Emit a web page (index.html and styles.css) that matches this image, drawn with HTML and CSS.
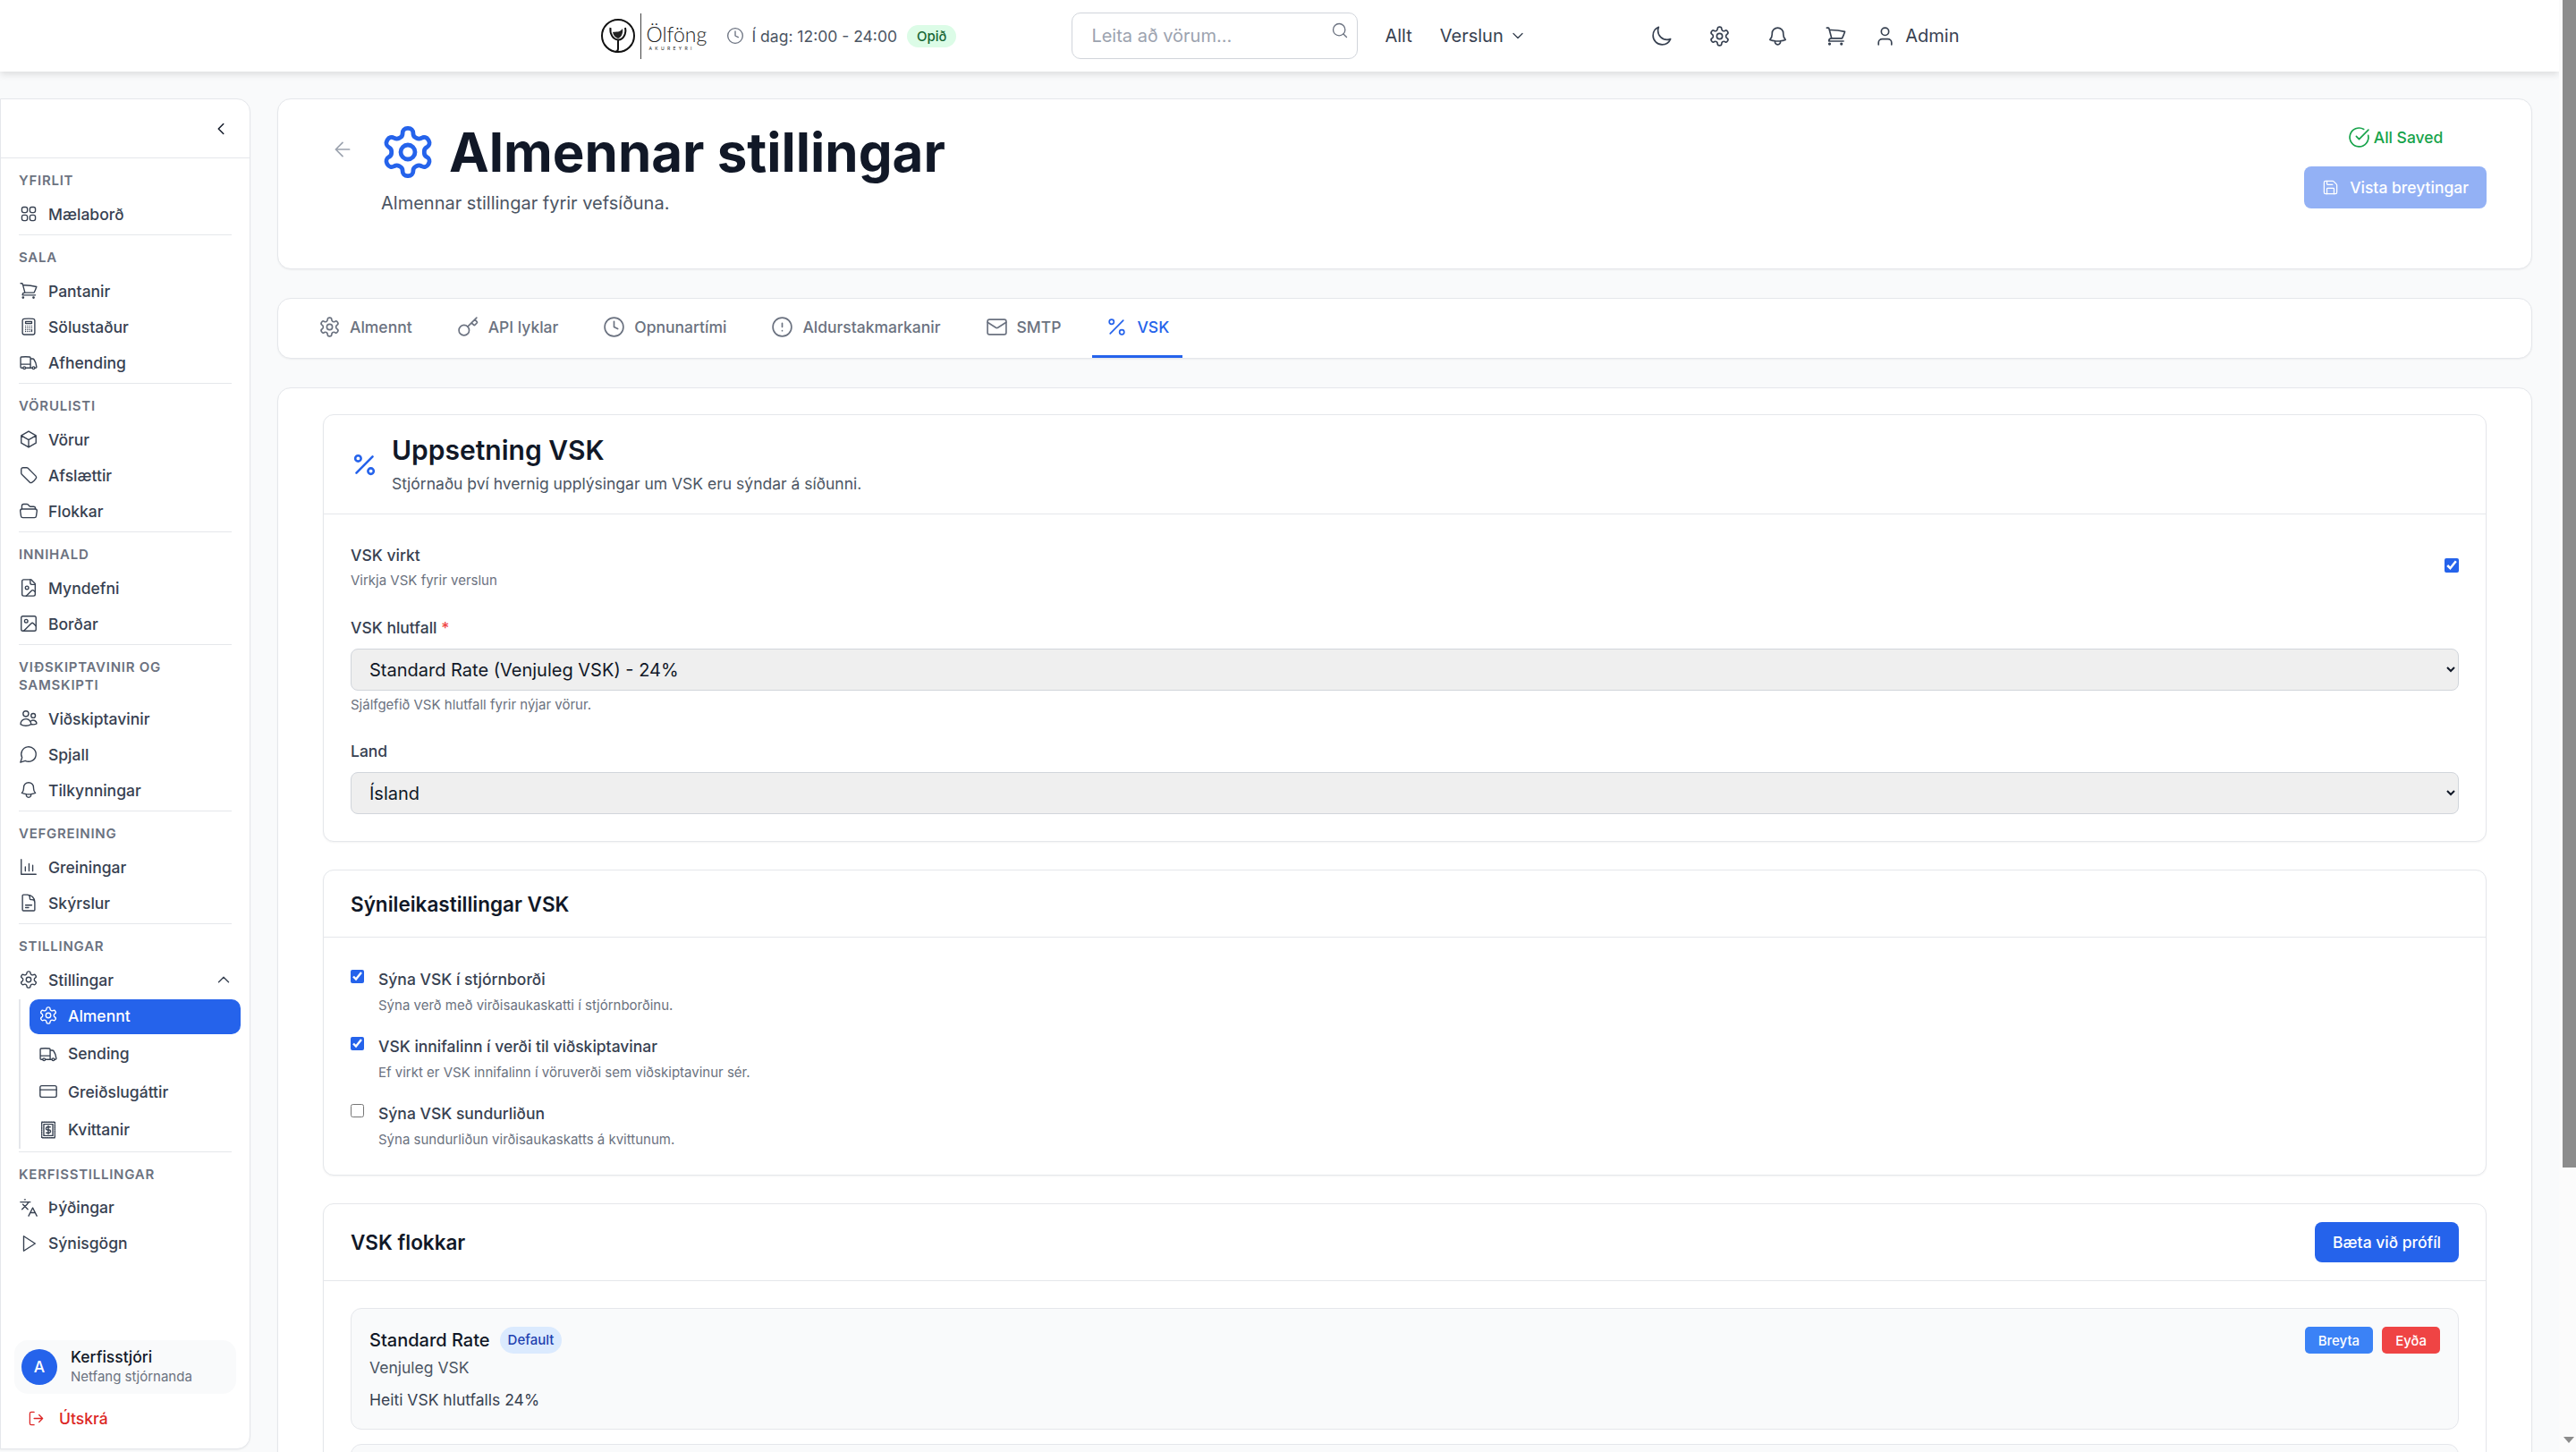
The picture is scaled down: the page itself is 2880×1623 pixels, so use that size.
FILE: index.html
```html
<!DOCTYPE html>
<html lang="is">
<head>
    <meta charset="UTF-8">
    <meta name="viewport" content="width=device-width, initial-scale=1.0">
    <title>Almennar stillingar</title>
    <link rel="stylesheet" href="styles.css">
</head>
<body>
    <svg class="icon-defs" aria-hidden="true">
        <symbol id="i-grid" viewBox="0 0 24 24"><path d="M3.75 6A2.25 2.25 0 0 1 6 3.75h2.25A2.25 2.25 0 0 1 10.5 6v2.25a2.25 2.25 0 0 1-2.25 2.25H6a2.25 2.25 0 0 1-2.25-2.25V6ZM3.75 15.75A2.25 2.25 0 0 1 6 13.5h2.25a2.25 2.25 0 0 1 2.25 2.25V18a2.25 2.25 0 0 1-2.25 2.25H6A2.25 2.25 0 0 1 3.75 18v-2.25ZM13.5 6a2.25 2.25 0 0 1 2.25-2.25H18A2.25 2.25 0 0 1 20.25 6v2.25A2.25 2.25 0 0 1 18 10.5h-2.25a2.25 2.25 0 0 1-2.25-2.25V6ZM13.5 15.75a2.25 2.25 0 0 1 2.25-2.25H18a2.25 2.25 0 0 1 2.25 2.25V18A2.25 2.25 0 0 1 18 20.25h-2.25A2.25 2.25 0 0 1 13.5 18v-2.25Z"/></symbol>
        <symbol id="i-cart" viewBox="0 0 24 24"><path d="M2.25 3h1.386c.51 0 .955.343 1.087.835l.383 1.437M7.5 14.25a3 3 0 0 0-3 3h15.75m-12.75-3h11.218c1.121-2.3 2.1-4.684 2.924-7.138a60.114 60.114 0 0 0-16.536-1.84M7.5 14.25 5.106 5.272M6 20.25a.75.75 0 1 1-1.5 0 .75.75 0 0 1 1.5 0Zm12.75 0a.75.75 0 1 1-1.5 0 .75.75 0 0 1 1.5 0Z"/></symbol>
        <symbol id="i-calculator" viewBox="0 0 24 24"><path d="M15.75 15.75V18m-7.5-6.75h.008v.008H8.25v-.008Zm0 2.25h.008v.008H8.25V13.5Zm0 2.25h.008v.008H8.25v-.008Zm0 2.25h.008v.008H8.25V18Zm2.498-6.75h.007v.008h-.007v-.008Zm0 2.25h.007v.008h-.007V13.5Zm0 2.25h.007v.008h-.007v-.008Zm0 2.25h.007v.008h-.007V18Zm2.504-6.75h.008v.008h-.008v-.008Zm0 2.25h.008v.008h-.008V13.5Zm0 2.25h.008v.008h-.008v-.008Zm0 2.25h.008v.008h-.008V18Zm2.498-6.75h.008v.008h-.008v-.008Zm0 2.25h.008v.008h-.008V13.5ZM8.25 6h7.5v2.25h-7.5V6ZM12 2.25c-1.892 0-3.758.11-5.593.322C5.307 2.7 4.5 3.65 4.5 4.757V19.5a2.25 2.25 0 0 0 2.25 2.25h10.5a2.25 2.25 0 0 0 2.25-2.25V4.757c0-1.108-.806-2.057-1.907-2.185A48.507 48.507 0 0 0 12 2.25Z"/></symbol>
        <symbol id="i-truck" viewBox="0 0 24 24"><path d="M8.25 18.75a1.5 1.5 0 0 1-3 0m3 0a1.5 1.5 0 0 0-3 0m3 0h6m-9 0H3.375a1.125 1.125 0 0 1-1.125-1.125V14.25m17.25 4.5a1.5 1.5 0 0 1-3 0m3 0a1.5 1.5 0 0 0-3 0m3 0h1.125c.621 0 1.129-.504 1.09-1.124a17.902 17.902 0 0 0-3.213-9.193 2.056 2.056 0 0 0-1.58-.86H14.25M16.5 18.75h-2.25m0-11.177v-.958c0-.568-.422-1.048-.987-1.106a48.554 48.554 0 0 0-10.026 0 1.106 1.106 0 0 0-.987 1.106v7.635m12-6.677v6.677m0 4.5v-4.5m0 0h-12"/></symbol>
        <symbol id="i-cube" viewBox="0 0 24 24"><path d="m21 7.5-9-5.25L3 7.5m18 0-9 5.25m9-5.25v9l-9 5.25M3 7.5l9 5.25M3 7.5v9l9 5.25m0-9v9"/></symbol>
        <symbol id="i-tag" viewBox="0 0 24 24"><path d="M9.568 3H5.25A2.25 2.25 0 0 0 3 5.25v4.318c0 .597.237 1.17.659 1.591l9.581 9.581c.699.699 1.78.872 2.607.33a18.095 18.095 0 0 0 5.223-5.223c.542-.827.369-1.908-.33-2.607L11.16 3.66A2.25 2.25 0 0 0 9.568 3Z"/></symbol>
        <symbol id="i-folder" viewBox="0 0 24 24"><path d="M3.75 9.776c.112-.017.227-.026.344-.026h15.812c.117 0 .232.009.344.026m-16.5 0a2.25 2.25 0 0 0-1.883 2.542l.857 6a2.25 2.25 0 0 0 2.227 1.932H19.05a2.25 2.25 0 0 0 2.227-1.932l.857-6a2.25 2.25 0 0 0-1.883-2.542m-16.5 0V6A2.25 2.25 0 0 1 6 3.75h3.879a1.5 1.5 0 0 1 1.06.44l2.122 2.12a1.5 1.5 0 0 0 1.06.44H18A2.25 2.25 0 0 1 20.25 9v.776"/></symbol>
        <symbol id="i-file-image" viewBox="0 0 24 24"><path d="M15 2H6a2 2 0 0 0-2 2v16a2 2 0 0 0 2 2h12a2 2 0 0 0 2-2V7Z"/><path d="M14 2v4a2 2 0 0 0 2 2h4"/><circle cx="10" cy="12" r="2"/><path d="m20 17-1.296-1.296a2.41 2.41 0 0 0-3.408 0L9 22"/></symbol>
        <symbol id="i-image" viewBox="0 0 24 24"><rect x="3" y="3" width="18" height="18" rx="2"/><circle cx="9" cy="9" r="2"/><path d="m21 15-3.086-3.086a2 2 0 0 0-2.828 0L6 21"/></symbol>
        <symbol id="i-users" viewBox="0 0 24 24"><path d="M15 19.128a9.38 9.38 0 0 0 2.625.372 9.337 9.337 0 0 0 4.121-.952 4.125 4.125 0 0 0-7.533-2.493M15 19.128v-.003c0-1.113-.285-2.16-.786-3.07M15 19.128v.106A12.318 12.318 0 0 1 8.624 21c-2.331 0-4.512-.645-6.374-1.766l-.001-.109a6.375 6.375 0 0 1 11.964-3.07M12 6.375a3.375 3.375 0 1 1-6.75 0 3.375 3.375 0 0 1 6.75 0Zm8.25 2.25a2.625 2.625 0 1 1-5.25 0 2.625 2.625 0 0 1 5.25 0Z"/></symbol>
        <symbol id="i-chat" viewBox="0 0 24 24"><path d="M7.9 20A9 9 0 1 0 4 16.1L2 22Z"/></symbol>
        <symbol id="i-bell" viewBox="0 0 24 24"><path d="M14.857 17.082a23.848 23.848 0 0 0 5.454-1.31A8.967 8.967 0 0 1 18 9.75V9A6 6 0 0 0 6 9v.75a8.967 8.967 0 0 1-2.312 6.022c1.733.64 3.56 1.085 5.455 1.31m5.714 0a24.255 24.255 0 0 1-5.714 0m5.714 0a3 3 0 1 1-5.714 0"/></symbol>
        <symbol id="i-chart" viewBox="0 0 24 24"><path d="M3 3v18h18M8 17v-5M12.5 17V8M17 17v-7"/></symbol>
        <symbol id="i-doc" viewBox="0 0 24 24"><path d="M19.5 14.25v-2.625a3.375 3.375 0 0 0-3.375-3.375h-1.5A1.125 1.125 0 0 1 13.5 7.125v-1.5a3.375 3.375 0 0 0-3.375-3.375H8.25m0 12.75h7.5m-7.5 3H12M10.5 2.25H5.625c-.621 0-1.125.504-1.125 1.125v17.25c0 .621.504 1.125 1.125 1.125h12.75c.621 0 1.125-.504 1.125-1.125V11.25a9 9 0 0 0-9-9Z"/></symbol>
        <symbol id="i-gear" viewBox="0 0 24 24"><path d="M12.22 2h-.44a2 2 0 0 0-2 2v.18a2 2 0 0 1-1 1.73l-.43.25a2 2 0 0 1-2 0l-.15-.08a2 2 0 0 0-2.73.73l-.22.38a2 2 0 0 0 .73 2.73l.15.1a2 2 0 0 1 1 1.72v.51a2 2 0 0 1-1 1.74l-.15.09a2 2 0 0 0-.73 2.73l.22.38a2 2 0 0 0 2.73.73l.15-.08a2 2 0 0 1 2 0l.43.25a2 2 0 0 1 1 1.73V20a2 2 0 0 0 2 2h.44a2 2 0 0 0 2-2v-.18a2 2 0 0 1 1-1.73l.43-.25a2 2 0 0 1 2 0l.15.08a2 2 0 0 0 2.73-.73l.22-.39a2 2 0 0 0-.73-2.73l-.15-.08a2 2 0 0 1-1-1.74v-.5a2 2 0 0 1 1-1.74l.15-.09a2 2 0 0 0 .73-2.73l-.22-.38a2 2 0 0 0-2.73-.73l-.15.08a2 2 0 0 1-2 0l-.43-.25a2 2 0 0 1-1-1.73V4a2 2 0 0 0-2-2z"/><circle cx="12" cy="12" r="3"/></symbol>
        <symbol id="i-card" viewBox="0 0 24 24"><rect x="2" y="5" width="20" height="14" rx="2"/><path d="M2 10h20"/></symbol>
        <symbol id="i-receipt" viewBox="0 0 24 24"><rect x="4" y="2.5" width="16" height="19" stroke-dasharray="1.6 1.1"/><rect x="6.5" y="5" width="11" height="14"/><path d="M14.5 8.5H11a1.75 1.75 0 0 0 0 3.5h2a1.75 1.75 0 0 1 0 3.5H9.5M12 7v10"/></symbol>
        <symbol id="i-languages" viewBox="0 0 24 24"><path d="m5 8 6 6M4 14l6-6 2-3M2 5h12M7 2h1M22 22l-5-10-5 10M14 18h6"/></symbol>
        <symbol id="i-play" viewBox="0 0 24 24"><path d="M6 3l14 9-14 9V3z"/></symbol>
        <symbol id="i-logout" viewBox="0 0 24 24"><path d="M9 21H5a2 2 0 0 1-2-2V5a2 2 0 0 1 2-2h4M16 17l5-5-5-5M21 12H9"/></symbol>
        <symbol id="i-moon" viewBox="0 0 24 24"><path d="M21.752 15.002A9.72 9.72 0 0 1 18 15.75c-5.385 0-9.75-4.365-9.75-9.75 0-1.33.266-2.597.748-3.752A9.753 9.753 0 0 0 3 11.25C3 16.635 7.365 21 12.75 21a9.753 9.753 0 0 0 9.002-5.998Z"/></symbol>
        <symbol id="i-user" viewBox="0 0 24 24"><path d="M19 21v-2a4 4 0 0 0-4-4H9a4 4 0 0 0-4 4v2"/><circle cx="12" cy="7" r="4"/></symbol>
        <symbol id="i-search" viewBox="0 0 24 24"><circle cx="11" cy="11" r="8"/><path d="m21 21-4.3-4.3"/></symbol>
        <symbol id="i-clock" viewBox="0 0 24 24"><circle cx="12" cy="12" r="10"/><path d="M12 6v6l4 2"/></symbol>
        <symbol id="i-key" viewBox="0 0 24 24"><path d="m15.5 7.5 2.3 2.3a1 1 0 0 0 1.4 0l2.1-2.1a1 1 0 0 0 0-1.4L19 4M21 2l-9.6 9.6"/><circle cx="7.5" cy="15.5" r="5.5"/></symbol>
        <symbol id="i-alert" viewBox="0 0 24 24"><circle cx="12" cy="12" r="10"/><path d="M12 8v4M12 16h.01"/></symbol>
        <symbol id="i-mail" viewBox="0 0 24 24"><rect x="2" y="4" width="20" height="16" rx="2"/><path d="m22 7-8.97 5.7a1.94 1.94 0 0 1-2.06 0L2 7"/></symbol>
        <symbol id="i-percent" viewBox="0 0 24 24"><path d="M19 5 5 19"/><circle cx="6.5" cy="6.5" r="2.5"/><circle cx="17.5" cy="17.5" r="2.5"/></symbol>
        <symbol id="i-save" viewBox="0 0 24 24"><path d="M15.2 3a2 2 0 0 1 1.4.6l3.8 3.8a2 2 0 0 1 .6 1.4V19a2 2 0 0 1-2 2H5a2 2 0 0 1-2-2V5a2 2 0 0 1 2-2z"/><path d="M17 21v-7a1 1 0 0 0-1-1H8a1 1 0 0 0-1 1v7M7 3v4a1 1 0 0 0 1 1h7"/></symbol>
        <symbol id="i-check" viewBox="0 0 24 24"><path d="M21.8 10A10 10 0 1 1 17 3.335M9 11l3 3L22 4"/></symbol>
        <symbol id="i-left" viewBox="0 0 24 24"><path d="m15 18-6-6 6-6"/></symbol>
        <symbol id="i-up" viewBox="0 0 24 24"><path d="m18 15-6-6-6 6"/></symbol>
        <symbol id="i-down" viewBox="0 0 24 24"><path d="m6 9 6 6 6-6"/></symbol>
        <symbol id="i-back" viewBox="0 0 24 24"><path d="m12 19-7-7 7-7M19 12H5"/></symbol>
    </svg>

    <div class="page">
        <header class="topbar">
            <div class="topbar-inner">
                <div class="brand">
                    <svg class="brand-mark" viewBox="0 0 40 40">
                        <circle cx="20" cy="20" r="18"/>
                        <path d="M11.5 11c-1 7 3 13 8.500 13.500s9.500-6.500 8-13.500M20 24.500v10q0 3-3 3.500"/>
                        <path class="brand-leaf" d="M14 16c3-1 8 1 11-4 1 6-2 10-5 11-3-1-5-3-6-7z"/>
                    </svg>
                    <div class="brand-text">
                        <span class="brand-name">Ölföng</span>
                        <span class="brand-sub">AKUREYRI</span>
                    </div>
                </div>
                <div class="hours">
                    <svg class="icon hours-icon"><use href="#i-clock"/></svg>
                    <span>Í dag: 12:00 - 24:00</span>
                    <span class="open-badge">Opið</span>
                </div>
                <div class="search">
                    <input type="text" placeholder="Leita að vörum...">
                    <svg class="icon search-icon"><use href="#i-search"/></svg>
                </div>
                <nav class="topnav">
                    <span>Allt</span>
                    <span class="topnav-drop">Verslun <svg class="icon"><use href="#i-down"/></svg></span>
                </nav>
                <div class="topicons">
                    <svg class="icon"><use href="#i-moon"/></svg>
                    <svg class="icon"><use href="#i-gear"/></svg>
                    <svg class="icon"><use href="#i-bell"/></svg>
                    <svg class="icon"><use href="#i-cart"/></svg>
                    <span class="admin"><svg class="icon"><use href="#i-user"/></svg>Admin</span>
                </div>
            </div>
        </header>

        <div class="layout">
            <aside class="sidebar">
                <div class="sidebar-top"><svg class="icon"><use href="#i-left"/></svg></div>

                <div class="nav-section">
                    <div class="nav-title">Yfirlit</div>
                    <a class="nav-item"><svg class="icon"><use href="#i-grid"/></svg>Mælaborð</a>
                </div>
                <div class="nav-section">
                    <div class="nav-title">Sala</div>
                    <a class="nav-item"><svg class="icon"><use href="#i-cart"/></svg>Pantanir</a>
                    <a class="nav-item"><svg class="icon"><use href="#i-calculator"/></svg>Sölustaður</a>
                    <a class="nav-item"><svg class="icon"><use href="#i-truck"/></svg>Afhending</a>
                </div>
                <div class="nav-section">
                    <div class="nav-title">Vörulisti</div>
                    <a class="nav-item"><svg class="icon"><use href="#i-cube"/></svg>Vörur</a>
                    <a class="nav-item"><svg class="icon"><use href="#i-tag"/></svg>Afslættir</a>
                    <a class="nav-item"><svg class="icon"><use href="#i-folder"/></svg>Flokkar</a>
                </div>
                <div class="nav-section">
                    <div class="nav-title">Innihald</div>
                    <a class="nav-item"><svg class="icon"><use href="#i-file-image"/></svg>Myndefni</a>
                    <a class="nav-item"><svg class="icon"><use href="#i-image"/></svg>Borðar</a>
                </div>
                <div class="nav-section">
                    <div class="nav-title">Viðskiptavinir og samskipti</div>
                    <a class="nav-item"><svg class="icon"><use href="#i-users"/></svg>Viðskiptavinir</a>
                    <a class="nav-item"><svg class="icon"><use href="#i-chat"/></svg>Spjall</a>
                    <a class="nav-item"><svg class="icon"><use href="#i-bell"/></svg>Tilkynningar</a>
                </div>
                <div class="nav-section">
                    <div class="nav-title">Vefgreining</div>
                    <a class="nav-item"><svg class="icon"><use href="#i-chart"/></svg>Greiningar</a>
                    <a class="nav-item"><svg class="icon"><use href="#i-doc"/></svg>Skýrslur</a>
                </div>
                <div class="nav-section">
                    <div class="nav-title">Stillingar</div>
                    <a class="nav-item"><svg class="icon"><use href="#i-gear"/></svg>Stillingar<svg class="icon nav-caret"><use href="#i-up"/></svg></a>
                    <div class="subnav">
                        <a class="sub-item active"><svg class="icon"><use href="#i-gear"/></svg>Almennt</a>
                        <a class="sub-item"><svg class="icon"><use href="#i-truck"/></svg>Sending</a>
                        <a class="sub-item"><svg class="icon"><use href="#i-card"/></svg>Greiðslugáttir</a>
                        <a class="sub-item"><svg class="icon"><use href="#i-receipt"/></svg>Kvittanir</a>
                    </div>
                </div>
                <div class="nav-section last">
                    <div class="nav-title">Kerfisstillingar</div>
                    <a class="nav-item"><svg class="icon"><use href="#i-languages"/></svg>Þýðingar</a>
                    <a class="nav-item"><svg class="icon"><use href="#i-play"/></svg>Sýnisgögn</a>
                </div>

                <div class="sidebar-foot">
                    <div class="user-box">
                        <div class="avatar">A</div>
                        <div>
                            <div class="user-name">Kerfisstjóri</div>
                            <div class="user-mail">Netfang stjórnanda</div>
                        </div>
                    </div>
                    <a class="logout"><svg class="icon"><use href="#i-logout"/></svg>Útskrá</a>
                </div>
            </aside>

            <main class="main">
                <section class="title-card">
                    <svg class="icon back-icon"><use href="#i-back"/></svg>
                    <div class="title-text">
                        <div class="title-row">
                            <svg class="icon title-icon"><use href="#i-gear"/></svg>
                            <h1>Almennar stillingar</h1>
                        </div>
                        <p>Almennar stillingar fyrir vefsíðuna.</p>
                    </div>
                    <div class="save-col">
                        <div class="saved"><svg class="icon"><use href="#i-check"/></svg>All Saved</div>
                        <button class="save-btn"><svg class="icon"><use href="#i-save"/></svg>Vista breytingar</button>
                    </div>
                </section>

                <nav class="tabs">
                    <a class="tab"><svg class="icon"><use href="#i-gear"/></svg>Almennt</a>
                    <a class="tab"><svg class="icon"><use href="#i-key"/></svg>API lyklar</a>
                    <a class="tab"><svg class="icon"><use href="#i-clock"/></svg>Opnunartími</a>
                    <a class="tab"><svg class="icon"><use href="#i-alert"/></svg>Aldurstakmarkanir</a>
                    <a class="tab"><svg class="icon"><use href="#i-mail"/></svg>SMTP</a>
                    <a class="tab active"><svg class="icon"><use href="#i-percent"/></svg>VSK</a>
                </nav>

                <section class="panel">
                    <div class="card">
                        <div class="card-head head-large">
                            <svg class="icon head-icon"><use href="#i-percent"/></svg>
                            <div>
                                <h2>Uppsetning VSK</h2>
                                <p>Stjórnaðu því hvernig upplýsingar um VSK eru sýndar á síðunni.</p>
                            </div>
                        </div>
                        <div class="card-body body-form">
                            <div class="toggle-row">
                                <div>
                                    <label class="field-label">VSK virkt</label>
                                    <div class="help">Virkja VSK fyrir verslun</div>
                                </div>
                                <input type="checkbox" class="check check-right" checked>
                            </div>
                            <div class="field">
                                <label class="field-label">VSK hlutfall <span class="req">*</span></label>
                                <select class="select">
                                    <option>Standard Rate (Venjuleg VSK) - 24%</option>
                                </select>
                                <div class="help">Sjálfgefið VSK hlutfall fyrir nýjar vörur.</div>
                            </div>
                            <div class="field">
                                <label class="field-label">Land</label>
                                <select class="select">
                                    <option>Ísland</option>
                                </select>
                            </div>
                        </div>
                    </div>

                    <div class="card">
                        <div class="card-head">
                            <h3>Sýnileikastillingar VSK</h3>
                        </div>
                        <div class="card-body body-checks">
                            <div class="check-row">
                                <input type="checkbox" class="check" checked>
                                <div>
                                    <label class="field-label">Sýna VSK í stjórnborði</label>
                                    <div class="help">Sýna verð með virðisaukaskatti í stjórnborðinu.</div>
                                </div>
                            </div>
                            <div class="check-row">
                                <input type="checkbox" class="check" checked>
                                <div>
                                    <label class="field-label">VSK innifalinn í verði til viðskiptavinar</label>
                                    <div class="help">Ef virkt er VSK innifalinn í vöruverði sem viðskiptavinur sér.</div>
                                </div>
                            </div>
                            <div class="check-row">
                                <input type="checkbox" class="check">
                                <div>
                                    <label class="field-label">Sýna VSK sundurliðun</label>
                                    <div class="help">Sýna sundurliðun virðisaukaskatts á kvittunum.</div>
                                </div>
                            </div>
                        </div>
                    </div>

                    <div class="card">
                        <div class="card-head head-action">
                            <h3>VSK flokkar</h3>
                            <button class="add-btn">Bæta við prófíl</button>
                        </div>
                        <div class="card-body body-list">
                            <div class="vat-item">
                                <div class="vat-info">
                                    <div class="vat-title">Standard Rate <span class="default-badge">Default</span></div>
                                    <div class="vat-desc">Venjuleg VSK</div>
                                    <div class="vat-rate">Heiti VSK hlutfalls 24%</div>
                                </div>
                                <div class="vat-actions">
                                    <button class="small-btn edit">Breyta</button>
                                    <button class="small-btn del">Eyða</button>
                                </div>
                            </div>
                            <div class="vat-item"></div>
                        </div>
                    </div>
                </section>
            </main>
        </div>
    </div>

    <div class="scrollbar">
        <div class="scroll-thumb"></div>
        <div class="scroll-arrow"></div>
    </div>
</body>
</html>
```

FILE: styles.css
```css
* {
    margin: 0;
    padding: 0;
    box-sizing: border-box;
}

body {
    display: flex;
    height: 100vh;
    overflow: hidden;
    background-color: #f9fafb;
    color: #374151;
    font-family: Inter, "Liberation Sans", sans-serif;
    font-size: 17.5px;
}

.icon-defs {
    display: none;
}

.icon {
    flex: none;
    width: 25px;
    height: 25px;
    fill: none;
    stroke: currentColor;
    stroke-width: 1.6;
    stroke-linecap: round;
    stroke-linejoin: round;
}

.page {
    flex: 1;
    min-width: 0;
    display: flex;
    flex-direction: column;
}

/* top bar */
.topbar {
    position: relative;
    z-index: 2;
    flex: none;
    height: 80px;
    background-color: #fff;
    box-shadow: 0 3px 8px rgba(0, 0, 0, 0.12);
}

.topbar-inner {
    display: flex;
    align-items: center;
    max-width: 1600px;
    height: 100%;
    margin: 0 auto;
    padding: 0 40px;
}

.brand {
    display: flex;
    align-items: center;
    width: 120px;
}

.brand-mark {
    flex: none;
    width: 40px;
    height: 40px;
    fill: none;
    stroke: #111;
    stroke-width: 2;
}

.brand-leaf {
    fill: #222;
    stroke: none;
}

.brand-text {
    display: flex;
    flex-direction: column;
    align-items: flex-start;
    height: 51px;
    margin-left: 5px;
    padding-left: 6px;
    border-left: 1px solid #444;
    color: #222;
}

.brand-name {
    margin-top: 11px;
    font-family: Lato, sans-serif;
    font-size: 23px;
    font-weight: 300;
    line-height: 24px;
}

.brand-sub {
    margin-top: 1px;
    padding-left: 3px;
    font-size: 5px;
    line-height: 6px;
    letter-spacing: 3.3px;
}

.hours {
    display: flex;
    align-items: center;
    margin-left: 21px;
    color: #4b5563;
}

.hours-icon {
    width: 20px;
    height: 20px;
    margin-right: 9px;
    color: #6b7280;
}

.open-badge {
    margin-left: 11px;
    padding: 0 11px;
    border-radius: 13px;
    background-color: #dcfce7;
    color: #166534;
    font-size: 15px;
    font-weight: 500;
    line-height: 25px;
}

.search {
    position: relative;
    width: 320px;
    margin-left: 129px;
}

.search input {
    display: block;
    width: 100%;
    height: 52px;
    padding: 0 50px 0 21px;
    border: 1px solid #d1d5db;
    border-radius: 10px;
    outline: none;
    color: #374151;
    font-family: inherit;
    font-size: 20px;
}

.search input::placeholder {
    color: #9ca3af;
}

.search-icon {
    position: absolute;
    top: 10px;
    right: 10px;
    width: 20px;
    height: 20px;
    color: #6b7280;
}

.topnav {
    display: flex;
    align-items: center;
    gap: 31px;
    margin-left: 30px;
    font-size: 20px;
}

.topnav-drop {
    display: flex;
    align-items: center;
    gap: 6px;
}

.topnav-drop .icon {
    width: 20px;
    height: 20px;
}

.topicons {
    display: flex;
    align-items: center;
    gap: 40px;
    margin-left: auto;
}

.admin {
    display: flex;
    align-items: center;
    gap: 10px;
    margin-left: -10px;
    font-size: 20px;
}

/* sidebar and main */
.layout {
    flex: 1;
    min-height: 0;
    display: flex;
    padding: 30px 30px 0 0;
    overflow: hidden;
}

.sidebar {
    flex: none;
    display: flex;
    flex-direction: column;
    width: 280px;
    height: 1510px;
    border: 1px solid #e5e7eb;
    border-radius: 0 15px 15px 0;
    background-color: #fff;
    box-shadow: 0 1px 2px rgba(0, 0, 0, 0.05);
}

.sidebar-top {
    display: flex;
    align-items: center;
    justify-content: flex-end;
    height: 66px;
    padding-right: 21px;
    border-bottom: 1px solid #e5e7eb;
}

.sidebar-top .icon {
    width: 22px;
    height: 22px;
    color: #111827;
}

.nav-section {
    margin: 0 20px;
    padding: 15px 0 3px;
    border-bottom: 1px solid #e5e7eb;
}

.nav-section.last {
    border-bottom: 0;
}

.nav-title {
    margin-bottom: 7px;
    color: #6b7280;
    font-size: 15px;
    font-weight: 600;
    line-height: 20px;
    letter-spacing: 0.75px;
    text-transform: uppercase;
}

.nav-item,
.sub-item {
    display: flex;
    align-items: center;
    gap: 11px;
    height: 40px;
    font-weight: 500;
}

.nav-item .icon,
.sub-item .icon {
    width: 22px;
    height: 22px;
    stroke-width: 1.5;
}

.nav-caret {
    margin-left: auto;
    margin-right: -2px;
}

.subnav {
    display: flex;
    flex-direction: column;
    gap: 3.5px;
    margin: 2px -10px 0 0;
    padding-left: 10px;
    border-left: 2px solid #e5e7eb;
}

.sub-item {
    height: 39px;
    padding: 0 0 3px 10px;
    border-radius: 10px;
}

.sub-item.active {
    background-color: #2563eb;
    color: #fff;
}

.sidebar-foot {
    margin-top: auto;
    padding: 0 15px 14px;
}

.user-box {
    display: flex;
    align-items: center;
    gap: 15px;
    height: 60px;
    padding: 0 8px;
    border-radius: 15px;
    background-color: #f9fafb;
}

.avatar {
    flex: none;
    width: 40px;
    height: 40px;
    border-radius: 50%;
    background-color: #2563eb;
    color: #fff;
    font-size: 17.5px;
    font-weight: 500;
    line-height: 40px;
    text-align: center;
}

.user-name {
    color: #111827;
    font-weight: 500;
    line-height: 22px;
}

.user-mail {
    color: #6b7280;
    font-size: 15px;
    line-height: 22px;
}

.logout {
    display: flex;
    align-items: center;
    gap: 16px;
    height: 40px;
    margin-top: 7px;
    padding-left: 15px;
    color: #dc2626;
    font-weight: 500;
}

.logout .icon {
    width: 19px;
    height: 19px;
}

.main {
    flex: 1;
    min-width: 0;
    display: flex;
    flex-direction: column;
    gap: 32px;
    margin-left: 30px;
}

.title-card,
.tabs,
.panel {
    flex: none;
    border: 1px solid #e5e7eb;
    border-radius: 15px;
    background-color: #fff;
    box-shadow: 0 1px 2px rgba(0, 0, 0, 0.05);
}

.title-card {
    display: flex;
    align-items: flex-start;
    height: 191px;
    padding: 26px 50px 0 59px;
}

.back-icon {
    width: 26px;
    height: 26px;
    margin: 17px 30px 0 0;
    color: #9ca3af;
}

.title-text {
    flex: 1;
}

.title-row {
    display: flex;
    align-items: center;
    gap: 14px;
    margin-left: -2px;
    height: 66px;
}

.title-icon {
    width: 64px;
    height: 64px;
    color: #2563eb;
    stroke-width: 1.8;
}

h1 {
    color: #111827;
    font-size: 60px;
    font-weight: 700;
    line-height: 66px;
}

.title-text p {
    margin-top: 9px;
    color: #4b5563;
    font-size: 20px;
    line-height: 30px;
}

.save-col {
    display: flex;
    flex-direction: column;
    align-items: center;
    gap: 20px;
    padding-top: 4px;
}

.saved {
    display: flex;
    align-items: center;
    gap: 4px;
    color: #16a34a;
    font-weight: 500;
    line-height: 25px;
}

.save-btn {
    display: flex;
    align-items: center;
    gap: 12px;
    height: 47px;
    padding: 0 20px;
    border: 0;
    border-radius: 8px;
    background-color: #93b1f5;
    color: #fff;
    font-family: inherit;
    font-size: 17.5px;
    font-weight: 500;
}

.save-btn .icon {
    width: 19px;
    height: 19px;
}

.tabs {
    display: flex;
    gap: 20px;
    height: 68px;
    padding-left: 30px;
}

.tab {
    display: flex;
    align-items: center;
    gap: 10px;
    padding: 0 15px;
    border-bottom: 3px solid transparent;
    color: #6b7280;
    font-weight: 500;
}

.tab.active {
    border-bottom-color: #2563eb;
    color: #2563eb;
}

.panel {
    display: flex;
    flex-direction: column;
    gap: 31px;
    padding: 29px 50px;
}

.card {
    border: 1px solid #e5e7eb;
    border-radius: 12px;
    background-color: #fff;
    box-shadow: 0 1px 2px rgba(0, 0, 0, 0.05);
}

.card-head {
    display: flex;
    align-items: center;
    height: 75px;
    padding: 0 30px;
    border-bottom: 1px solid #e5e7eb;
}

.head-large {
    gap: 15px;
    height: 111px;
}

.head-action {
    justify-content: space-between;
    height: 86px;
}

.head-icon {
    width: 31px;
    height: 31px;
    color: #2563eb;
    stroke-width: 2;
}

h2 {
    color: #111827;
    font-size: 30px;
    font-weight: 600;
    line-height: 36px;
}

.head-large p {
    margin-top: 8px;
    color: #4b5563;
    font-size: 17.5px;
    line-height: 24px;
}

h3 {
    color: #111827;
    font-size: 22.5px;
    font-weight: 600;
}

.card-body {
    padding: 0 30px;
}

.body-form {
    padding-top: 33px;
    padding-bottom: 30px;
}

.toggle-row {
    display: flex;
    align-items: center;
    justify-content: space-between;
}

.field {
    margin-top: 30px;
}

.field + .field {
    margin-top: 29px;
}

.field-label {
    display: block;
    font-weight: 500;
    line-height: 25px;
}

.req {
    color: #ef4444;
}

.help {
    margin-top: 6px;
    color: #6b7280;
    font-size: 15px;
    line-height: 20px;
}

.select {
    display: block;
    width: 100%;
    height: 47px;
    margin-top: 11px;
    padding: 0 16px;
    border: 1px solid #d1d5db;
    border-radius: 8px;
    background-color: #efefef;
    color: #111827;
    font-family: inherit;
    font-size: 20px;
}

.check {
    flex: none;
    width: 15px;
    height: 15px;
    accent-color: #2563eb;
}

.check-right {
    width: 16px;
    height: 16px;
    margin-bottom: 3px;
}

.body-checks {
    display: flex;
    flex-direction: column;
    gap: 23px;
    padding-top: 34px;
    padding-bottom: 29px;
}

.body-checks .help {
    margin-top: 7px;
}

.check-row {
    display: flex;
    align-items: flex-start;
    gap: 16px;
}

.check-row .check {
    margin-top: 2px;
}

.add-btn {
    height: 45px;
    padding: 0 20px;
    border: 0;
    border-radius: 8px;
    background-color: #2563eb;
    color: #fff;
    font-family: inherit;
    font-size: 17.5px;
    font-weight: 500;
}

.body-list {
    display: flex;
    flex-direction: column;
    gap: 16px;
    padding-top: 30px;
    padding-bottom: 30px;
}

.vat-item {
    display: flex;
    align-items: flex-start;
    justify-content: space-between;
    min-height: 136px;
    padding: 20px;
    border: 1px solid #e5e7eb;
    border-radius: 12px;
    background-color: #f9fafb;
}

.vat-title {
    display: flex;
    align-items: center;
    gap: 11px;
    height: 30px;
    color: #111827;
    font-size: 20px;
    font-weight: 500;
}

.default-badge {
    padding: 0 9px;
    border-radius: 15px;
    background-color: #dbeafe;
    color: #1e40af;
    font-size: 15px;
    line-height: 30px;
}

.vat-desc {
    margin-top: 4px;
    color: #4b5563;
    line-height: 24px;
}

.vat-rate {
    margin-top: 12px;
    line-height: 24px;
}

.vat-actions {
    display: flex;
    gap: 10px;
}

.small-btn {
    height: 30px;
    padding: 0 15px;
    border: 0;
    border-radius: 5px;
    color: #fff;
    font-family: inherit;
    font-size: 15px;
    font-weight: 500;
}

.small-btn.edit {
    background-color: #3b82f6;
}

.small-btn.del {
    background-color: #ef4444;
}

/* browser scrollbar as it shows in the screenshot */
.scrollbar {
    position: relative;
    z-index: 3;
    flex: none;
    width: 19px;
    padding-left: 4px;
    background-color: #fbfbfb;
}

.scroll-thumb {
    height: 1305px;
    background-color: #8c8c8c;
}

.scroll-arrow {
    position: absolute;
    right: 2px;
    bottom: 10px;
    border-top: 7px solid #8c8c8c;
    border-left: 6.5px solid transparent;
    border-right: 6.5px solid transparent;
}
```
